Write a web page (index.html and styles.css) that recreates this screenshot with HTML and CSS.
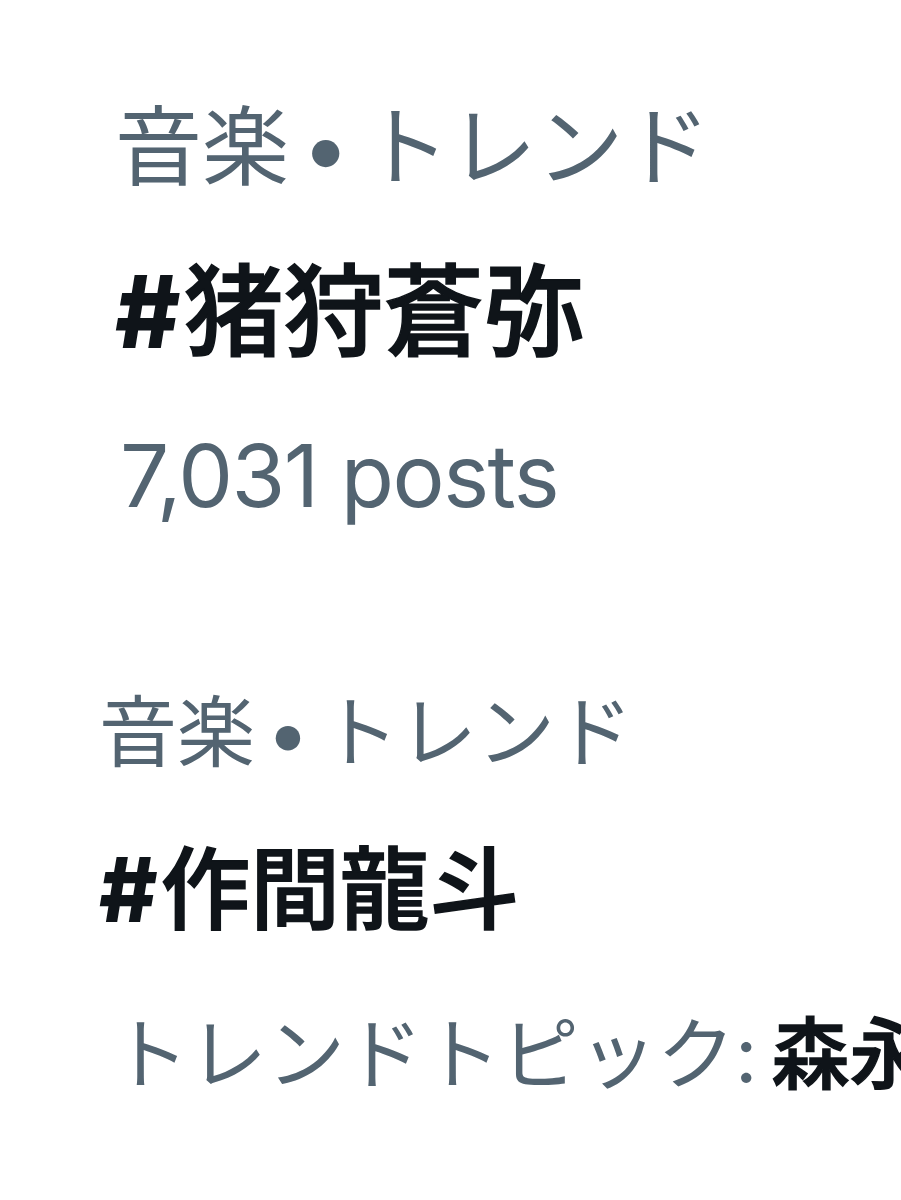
FILE: index.html
```html
<!DOCTYPE html>
<html lang="ja">

<head>
    <meta charset="UTF-8">
    <meta name="viewport" content="width=device-width, initial-scale=1.0">
    <title>トレンド</title>
    <link rel="stylesheet" href="styles.css">
</head>

<body>

    <div class="trend trend-large">
        <div class="trend-label">音楽 • トレンド</div>
        <div class="trend-name"><span class="hash">#</span>猪狩蒼弥</div>
        <div class="trend-count">7,031 posts</div>
    </div>

    <div class="trend trend-small">
        <div class="trend-label">音楽 • トレンド</div>
        <div class="trend-name"><span class="hash">#</span>作間龍斗</div>
        <div class="trend-topic">トレンドトピック: <span class="topic-name">森永</span></div>
    </div>

</body>

</html>
```

FILE: styles.css
```css
body {
    margin: 0;
    background-color: #fff;
    font-family: Inter, "Noto Sans CJK JP", sans-serif;
    color: #536471;
    overflow: hidden;
}

.trend {
    white-space: nowrap;
}

.trend-large {
    padding: 66px 0 0 115px;
    font-size: 87px;
    line-height: 164px;
}

.trend-small {
    padding: 96px 0 0 99px;
    font-size: 78px;
    line-height: 157px;
}

.trend-label {
    color: #536471;
    word-spacing: -0.14em;
}

.trend-name {
    font-size: 1.15em;
    font-weight: 500;
    color: #0f1419;
    -webkit-text-stroke: 1.5px #0f1419;
}

.hash {
    font-weight: 800;
    margin-right: 0.03em;
    -webkit-text-stroke: 0;
}

.trend-count {
    padding-left: 5px;
    letter-spacing: -1.5px;
}

.trend-topic {
    margin-top: 8px;
    padding-left: 12px;
    word-spacing: -0.1em;
}

.topic-name {
    font-weight: 500;
    color: #0f1419;
    -webkit-text-stroke: 1.5px #0f1419;
}
```
